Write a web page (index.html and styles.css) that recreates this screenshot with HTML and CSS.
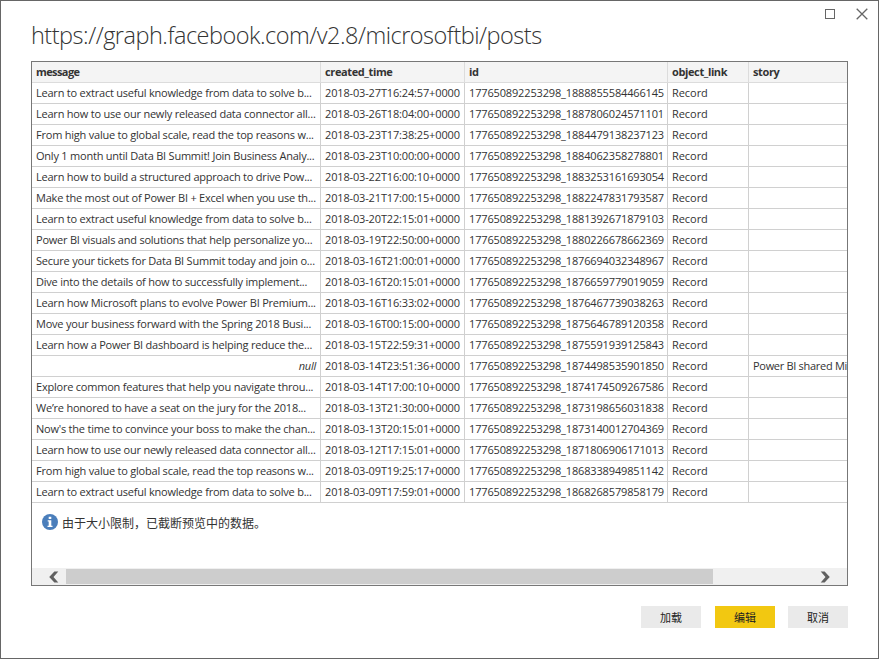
FILE: index.html
```
<!DOCTYPE html>
<html lang="zh-CN">
<head>
<meta charset="utf-8">
<title>Preview</title>
<link rel="stylesheet" href="styles.css">
</head>
<body>
<main class="dialog">
  <div class="window-controls">
    <svg width="12" height="12" viewBox="0 0 12 12"><rect x="1.5" y="1.5" width="9" height="9" fill="none" stroke="#666"/></svg>
    <svg width="12" height="12" viewBox="0 0 12 12"><path d="M.7.7 11.3 11.3M11.3.7.7 11.3" fill="none" stroke="#666" stroke-width="1.3"/></svg>
  </div>
  <h1 class="title">https://graph.facebook.com/v2.8/microsoftbi/posts</h1>
  <section class="preview">
    <table class="grid">
      <colgroup><col class="c-message"><col class="c-time"><col class="c-id"><col class="c-link"><col class="c-story"></colgroup>
      <thead><tr><th>message</th><th>created_time</th><th>id</th><th>object_link</th><th>story</th></tr></thead>
      <tbody>
        <tr><td>Learn to extract useful knowledge from data to solve b...</td><td>2018-03-27T16:24:57+0000</td><td>177650892253298_1888855584466145</td><td>Record</td><td></td></tr>
        <tr><td>Learn how to use our newly released data connector all...</td><td>2018-03-26T18:04:00+0000</td><td>177650892253298_1887806024571101</td><td>Record</td><td></td></tr>
        <tr><td>From high value to global scale, read the top reasons w...</td><td>2018-03-23T17:38:25+0000</td><td>177650892253298_1884479138237123</td><td>Record</td><td></td></tr>
        <tr><td>Only 1 month until Data BI Summit! Join Business Analy...</td><td>2018-03-23T10:00:00+0000</td><td>177650892253298_1884062358278801</td><td>Record</td><td></td></tr>
        <tr><td>Learn how to build a structured approach to drive Pow...</td><td>2018-03-22T16:00:10+0000</td><td>177650892253298_1883253161693054</td><td>Record</td><td></td></tr>
        <tr><td>Make the most out of Power BI + Excel when you use th...</td><td>2018-03-21T17:00:15+0000</td><td>177650892253298_1882247831793587</td><td>Record</td><td></td></tr>
        <tr><td>Learn to extract useful knowledge from data to solve b...</td><td>2018-03-20T22:15:01+0000</td><td>177650892253298_1881392671879103</td><td>Record</td><td></td></tr>
        <tr><td>Power BI visuals and solutions that help personalize yo...</td><td>2018-03-19T22:50:00+0000</td><td>177650892253298_1880226678662369</td><td>Record</td><td></td></tr>
        <tr><td>Secure your tickets for Data BI Summit today and join o...</td><td>2018-03-16T21:00:01+0000</td><td>177650892253298_1876694032348967</td><td>Record</td><td></td></tr>
        <tr><td>Dive into the details of how to successfully implement...</td><td>2018-03-16T20:15:01+0000</td><td>177650892253298_1876659779019059</td><td>Record</td><td></td></tr>
        <tr><td>Learn how Microsoft plans to evolve Power BI Premium...</td><td>2018-03-16T16:33:02+0000</td><td>177650892253298_1876467739038263</td><td>Record</td><td></td></tr>
        <tr><td>Move your business forward with the Spring 2018 Busi...</td><td>2018-03-16T00:15:00+0000</td><td>177650892253298_1875646789120358</td><td>Record</td><td></td></tr>
        <tr><td>Learn how a Power BI dashboard is helping reduce the...</td><td>2018-03-15T22:59:31+0000</td><td>177650892253298_1875591939125843</td><td>Record</td><td></td></tr>
        <tr><td class="null">null</td><td>2018-03-14T23:51:36+0000</td><td>177650892253298_1874498535901850</td><td>Record</td><td>Power BI shared Mi</td></tr>
        <tr><td>Explore common features that help you navigate throu...</td><td>2018-03-14T17:00:10+0000</td><td>177650892253298_1874174509267586</td><td>Record</td><td></td></tr>
        <tr><td>We’re honored to have a seat on the jury for the 2018...</td><td>2018-03-13T21:30:00+0000</td><td>177650892253298_1873198656031838</td><td>Record</td><td></td></tr>
        <tr><td>Now's the time to convince your boss to make the chan...</td><td>2018-03-13T20:15:01+0000</td><td>177650892253298_1873140012704369</td><td>Record</td><td></td></tr>
        <tr><td>Learn how to use our newly released data connector all...</td><td>2018-03-12T17:15:01+0000</td><td>177650892253298_1871806906171013</td><td>Record</td><td></td></tr>
        <tr><td>From high value to global scale, read the top reasons w...</td><td>2018-03-09T19:25:17+0000</td><td>177650892253298_1868338949851142</td><td>Record</td><td></td></tr>
        <tr><td>Learn to extract useful knowledge from data to solve b...</td><td>2018-03-09T17:59:01+0000</td><td>177650892253298_1868268579858179</td><td>Record</td><td></td></tr>
      </tbody>
    </table>
    <div class="notice">
      <svg width="16" height="16" viewBox="0 0 16 16"><circle cx="8" cy="8" r="8" fill="#4a7ebb"/><path d="M6.7 2.7h2.6v2.2H6.7zM5.7 6.2h3.6v5.6h1.2v1.3H5.5v-1.3h1.2V7.5h-1z" fill="#fff"/></svg>
      <span>由于大小限制，已截断预览中的数据。</span>
    </div>
    <div class="scrollbar">
      <svg class="arrow" width="10" height="12" viewBox="0 0 10 12"><path d="M5.4.5H9.3L4.5 6l4.8 5.5H5.4L.2 6z" fill="#606060"/></svg>
      <div class="track"><div class="thumb"></div></div>
      <svg class="arrow" width="10" height="12" viewBox="0 0 10 12"><path d="M4.6.5H.7L5.5 6 .7 11.5h3.9L9.8 6z" fill="#606060"/></svg>
    </div>
  </section>
  <footer class="actions">
    <button>加载</button>
    <button class="primary">编辑</button>
    <button class="last">取消</button>
  </footer>
</main>
</body>
</html>
```
FILE: styles.css
```
* { box-sizing: border-box; }
body {
  margin: 0;
  background: #fff;
  color: #333;
  font-family: "Open Sans", "Noto Sans CJK SC", sans-serif;
}
.dialog {
  width: 879px;
  height: 659px;
  border: 1px solid #666;
  padding: 7px 30px 0;
  display: flex;
  flex-direction: column;
  overflow: hidden;
}
.window-controls {
  display: flex;
  justify-content: flex-end;
  gap: 20px;
  height: 12px;
  margin-right: -20px;
}
.title {
  margin: 0;
  height: 41px;
  line-height: 30px;
  font-size: 23.5px;
  font-weight: 300;
  letter-spacing: -0.5px;
  white-space: nowrap;
}
.preview {
  width: 817px;
  height: 525px;
  flex: none;
  border: 1px solid #777;
  display: flex;
  flex-direction: column;
  overflow: hidden;
}
.grid {
  width: 815px;
  table-layout: fixed;
  border-collapse: separate;
  border-spacing: 0;
  font-size: 11px;
}
.c-message { width: 289px; }
.c-time { width: 144px; }
.c-id { width: 203px; }
.c-link { width: 81px; }
.grid th, .grid td {
  height: 21px;
  padding: 0 0 0 4px;
  border-right: 1px solid #d0d0d0;
  border-bottom: 1px solid #d0d0d0;
  line-height: 20px;
  letter-spacing: -0.15px;
  text-align: left;
  white-space: nowrap;
  overflow: hidden;
}
.grid td:first-child { letter-spacing: -0.22px; }
.grid td:nth-child(4) { letter-spacing: -0.05px; }
.grid th {
  background: #f4f4f4;
  font-weight: 700;
  letter-spacing: -0.38px;
  border-color: #dcdcdc;
}
.grid th:first-child { letter-spacing: -0.6px; }
.grid th:last-child, .grid td:last-child { border-right: 0; }
.grid td:last-child { letter-spacing: -0.3px; }
.grid td.null { text-align: right; font-style: italic; padding-right: 4px; }
.notice {
  flex: 1;
  display: flex;
  align-items: flex-start;
  gap: 4px;
  padding: 11px 0 0 10px;
  font-size: 12px;
  line-height: 20px;
}
.scrollbar {
  height: 17px;
  flex: none;
  display: flex;
  align-items: center;
  padding: 0 17px;
  background: #f0f0f0;
}
.track { flex: 1; padding: 0 7px; }
.thumb { width: 647px; height: 15px; background: #cdcdcd; }
.actions {
  display: flex;
  justify-content: flex-end;
  gap: 14px;
  margin-top: 20px;
}
.actions button {
  width: 60px;
  height: 22px;
  padding: 0;
  border: 0;
  background: #eaeaea;
  color: #222;
  font: 11px/22px "Noto Sans CJK SC", sans-serif;
}
.actions .primary { background: #f2c811; }
.actions .last { margin-left: -1px; }
```
